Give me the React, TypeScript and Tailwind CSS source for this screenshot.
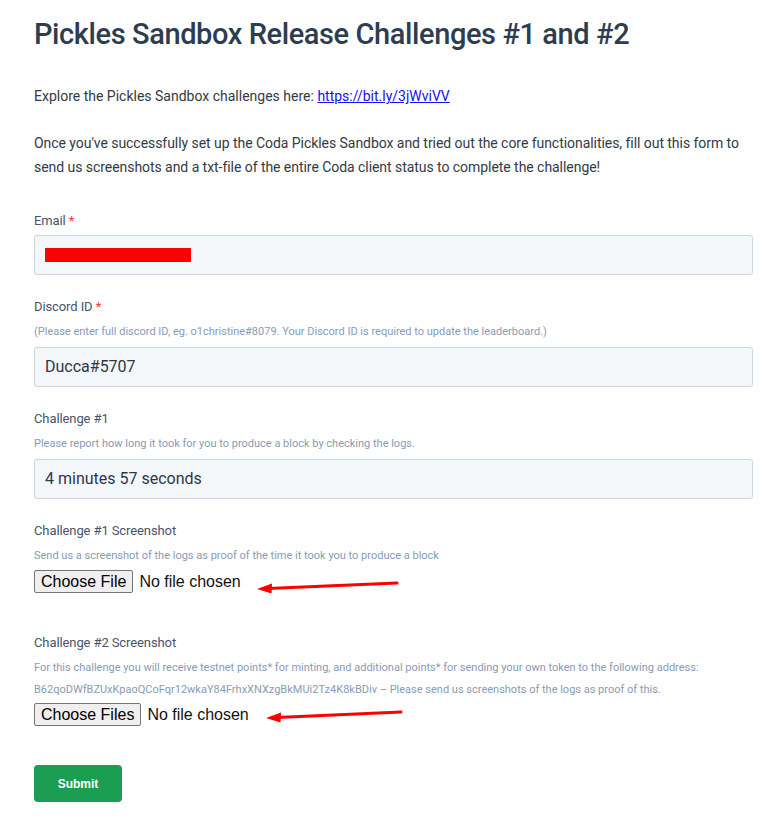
import React from "react";

const Arrow = ({ className, length }: { className: string; length: number }) => (
  <svg className={className} width="150" height="14" viewBox="0 0 150 14" fill="none">
    <line x1={length + 1} y1="2" x2="12" y2="7.5" stroke="#ff0000" strokeWidth="3" strokeLinecap="round" />
    <path d="M1 8 L16 2.5 L15.5 12.5 Z" fill="#ff0000" />
  </svg>
);

const Label = ({ text, required }: { text: string; required?: boolean }) => (
  <label className="block text-[13px] leading-[20px] text-[#475569] tracking-[-0.1px]">
    {text}
    {required && <span className="text-[#e53e3e]"> *</span>}
  </label>
);

const Help = ({ children }: { children: React.ReactNode }) => (
  <p className="mt-[4px] text-[11px] leading-[22px] text-[#8a9bb3]">{children}</p>
);

const TextField = ({ value, children }: { value?: string; children?: React.ReactNode }) => (
  <div className="h-10 w-full rounded-[3px] border border-[#cbd5e0] bg-[#f4f7fa] px-[10px] flex items-center text-[16px] text-[#2d3748]">
    {value}
    {children}
  </div>
);

const fileClass =
  "block h-[23px] text-[16px] leading-[18px] text-[#111] font-['Liberation_Sans',Arial,sans-serif] file:mr-[6px] file:h-[23px] file:rounded-[2px] file:border file:border-solid file:border-[#767676] file:bg-[#efefef] file:px-[6px] file:text-[16px] file:text-black file:font-['Liberation_Sans',Arial,sans-serif]";

export default function App() {
  return (
    <div className="min-h-screen bg-white pl-[34px] pr-[9px] pt-[14px] pb-8 font-['Roboto',sans-serif]">
      <h1 className="text-[29px] leading-[40px] font-medium text-[#2d3d4f] tracking-[-0.4px]">
        Pickles Sandbox Release Challenges #1 and #2
      </h1>

      <p className="mt-[30px] text-[14px] leading-[24px] text-[#333a44]">
        Explore the Pickles Sandbox challenges here:{" "}
        <a href="#" className="text-[#1a0dff] underline">
          https://bit.ly/3jWviVV
        </a>
      </p>

      <p className="mt-[23px] text-[14px] leading-[24px] text-[#333a44] tracking-[-0.05px]">
        Once you've successfully set up the Coda Pickles Sandbox and tried out the core
        functionalities, fill out this form to send us screenshots and a txt-file of the
        entire Coda client status to complete the challenge!
      </p>

      <div className="mt-[32px]">
        <Label text="Email" required />
        <div className="mt-[4px]">
          <TextField>
            <span className="block h-[14px] w-[146px] bg-[#ff0000]" />
          </TextField>
        </div>
      </div>

      <div className="mt-[22px]">
        <Label text="Discord ID" required />
        <Help>
          (Please enter full discord ID, eg. o1christine#8079. Your Discord ID is required to
          update the leaderboard.)
        </Help>
        <div className="mt-[4px]">
          <TextField value="Ducca#5707" />
        </div>
      </div>

      <div className="mt-[22px]">
        <Label text="Challenge #1" />
        <Help>Please report how long it took for you to produce a block by checking the logs.</Help>
        <div className="mt-[4px]">
          <TextField value="4 minutes 57 seconds" />
        </div>
      </div>

      <div className="mt-[22px]">
        <Label text="Challenge #1 Screenshot" />
        <Help>Send us a screenshot of the logs as proof of the time it took you to produce a block</Help>
        <div className="relative mt-[3px] h-[23px]">
          <input type="file" className={fileClass} />
          <Arrow length={140} className="absolute left-[222px] top-[11px]" />
        </div>
      </div>

      <div className="mt-[40px]">
        <Label text="Challenge #2 Screenshot" />
        <Help>
          For this challenge you will receive testnet points* for minting, and additional
          points* for sending your own token to the following address:
          B62qoDWfBZUxKpaoQCoFqr12wkaY84FrhxXNXzgBkMUi2Tz4K8kBDiv – Please send us screenshots
          of the logs as proof of this.
        </Help>
        <div className="relative mt-[2px] h-[23px]">
          <input type="file" multiple className={fileClass} />
          <Arrow length={135} className="absolute left-[231px] top-[7px]" />
        </div>
      </div>

      <button
        type="button"
        className="mt-[39px] h-[37px] w-[88px] rounded-[4px] bg-[#1b9e51] text-[12px] font-bold text-white font-['Liberation_Sans',Arial,sans-serif]"
      >
        Submit
      </button>
    </div>
  );
}
